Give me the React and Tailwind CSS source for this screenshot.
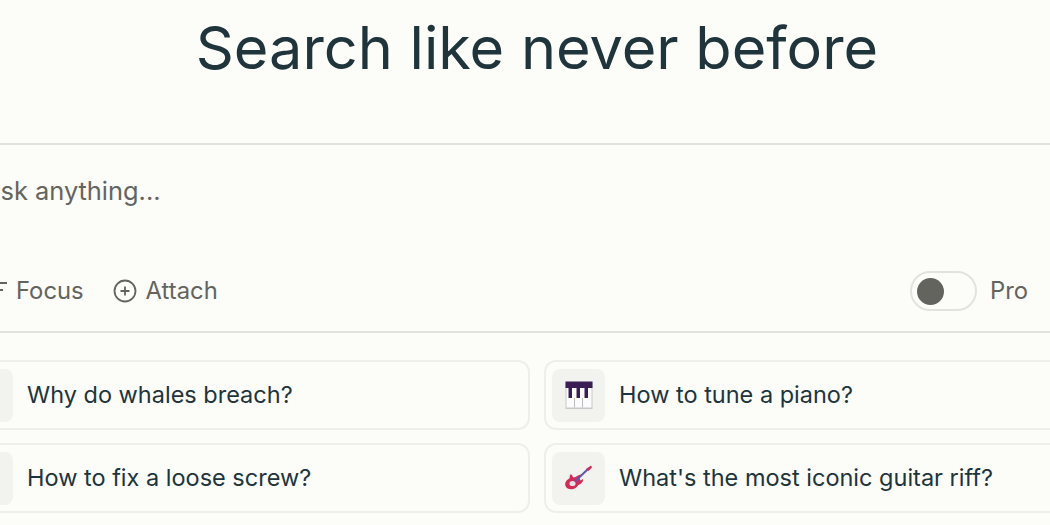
import React from "react";

function Piano() {
  return (
    <svg width="28" height="28" viewBox="0 0 28 28">
      <rect x="0.5" y="1" width="27" height="27" fill="#c9c7c9" />
      <rect x="1.5" y="1" width="25" height="25.5" fill="#fdfcfd" />
      <rect x="0.5" y="0.5" width="27" height="6.5" fill="#3c1e56" />
      <rect x="3.5" y="6" width="3.5" height="11" fill="#3c1e56" />
      <rect x="11.5" y="6" width="3.5" height="11" fill="#3c1e56" />
      <rect x="19.5" y="6" width="3.5" height="11" fill="#3c1e56" />
      <rect x="9" y="17" width="1" height="9.5" fill="#bdbac0" />
      <rect x="17" y="17" width="1" height="9.5" fill="#bdbac0" />
    </svg>
  );
}

function Guitar() {
  return (
    <svg width="28" height="28" viewBox="0 0 28 28">
      <path d="M6 10C3.5 12 6 13.5 3.5 15C1 16.5 -0.5 19 0.5 22C2 26 7.5 26 10.5 24C12.5 22.5 12.5 21 14.5 20.5C16.5 19.5 18.5 17.5 18 15L15.5 16.5L14.5 14L16.5 10.5C13 10.5 11 13.5 9 13.5C7.5 13.5 7.5 11.5 6 10Z" fill="#d02c55" />
      <ellipse cx="7.5" cy="19.5" rx="3" ry="2.6" fill="#e6e2e4" />
      <path d="M10 17.5L23 5" stroke="#5d58ac" strokeWidth="2" />
      <path d="M21 5L26 1.5L27 3.5L23.5 7Z" fill="#d02c55" />
    </svg>
  );
}

function Card({ icon, children }) {
  return (
    <div className="flex h-[70px] items-center gap-[14px] rounded-[12px] border-2 border-[#eeeeea] pl-[6px]">
      <div className="flex h-[53px] w-[53px] shrink-0 items-center justify-center rounded-[8px] bg-[#f2f2ef]">{icon}</div>
      <span className="text-[23.5px] text-[#20343b]">{children}</span>
    </div>
  );
}

export default function App() {
  return (
    <div className="h-[525px] w-[1050px] overflow-hidden bg-[#fcfcf9] [font-family:Inter,sans-serif]">
      <div className="ml-[-48px] w-[1170px]">
        <h1 className="pt-[11px] text-center text-[59.4px] leading-[72px] font-normal text-[#20343b]">Search like never before</h1>
        <div className="mt-[60px] flex h-[190px] flex-col justify-between border-y-2 border-[#e3e3de] px-[31px] pt-[30px] pb-[20px] text-[#64645f]">
          <div className="text-[25.4px] leading-[32px]">Ask anything...</div>
          <div className="flex items-center text-[23.8px]">
            <div className="flex items-center gap-[9px]">
              <svg width="24" height="24" viewBox="0 0 24 24" fill="none" stroke="currentColor" strokeWidth="2"><path d="M0 4H24M5 11H20M9 18H15" /></svg>
              <span>Focus</span>
            </div>
            <div className="ml-[29px] flex items-center gap-[9px]">
              <svg width="24" height="24" viewBox="0 0 24 24" fill="none" stroke="currentColor" strokeWidth="1.8"><circle cx="12" cy="12" r="10.5" /><path d="M12 7.5v9M7.5 12h9" /></svg>
              <span>Attach</span>
            </div>
            <div className="ml-auto flex h-[40px] w-[67px] items-center rounded-full border-2 border-[#e3e3de] pl-[5px]">
              <div className="h-[27px] w-[27px] rounded-full bg-[#64645f]" />
            </div>
            <span className="ml-[13px]">Pro</span>
            <div className="ml-[23px] h-[40px] w-[40px] rounded-full bg-[#e3e3de]" />
          </div>
        </div>
        <div className="mt-[27px] grid grid-cols-2 gap-x-[14px] gap-y-[13px]">
          <Card icon={null}>Why do whales breach?</Card>
          <Card icon={<Piano />}>How to tune a piano?</Card>
          <Card icon={null}>How to fix a loose screw?</Card>
          <Card icon={<Guitar />}>What's the most iconic guitar riff?</Card>
        </div>
      </div>
    </div>
  );
}
